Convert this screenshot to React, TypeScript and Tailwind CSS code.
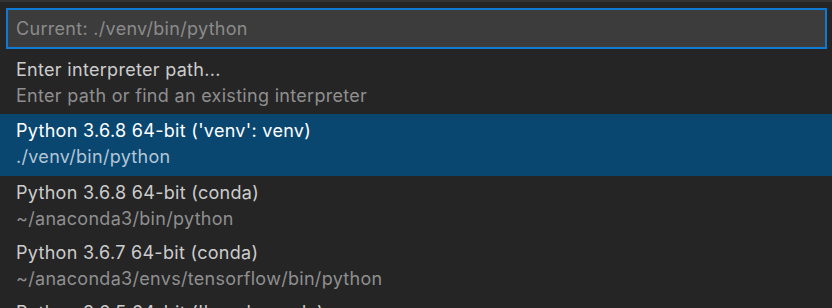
import React from 'react';

type Item = { label: string; detail: string; height: string };

const items: Item[] = [
  { label: 'Enter interpreter path...', detail: 'Enter path or find an existing interpreter', height: 'h-[61px]' },
  { label: "Python 3.6.8 64-bit ('venv': venv)", detail: './venv/bin/python', height: 'h-[62px]' },
  { label: 'Python 3.6.8 64-bit (conda)', detail: '~/anaconda3/bin/python', height: 'h-[60px]' },
  { label: 'Python 3.6.7 64-bit (conda)', detail: '~/anaconda3/envs/tensorflow/bin/python', height: 'h-[60px]' },
  { label: "Python 3.6.5 64-bit ('base': conda)", detail: '~/anaconda3/envs/base/bin/python', height: 'h-[60px]' },
];

export default function App() {
  const selected = 1;

  return (
    <div className="w-[832px] h-[308px] overflow-hidden bg-[#252526] font-['Inter',sans-serif] text-[18px] tracking-[0.3px]">
      {/* top edge of the panel */}
      <div className="h-[2px] bg-[#333333]" />

      {/* filter input */}
      <div className="pt-[6px] pl-[6px] pr-[5px]">
        <div className="h-[41px] border-2 border-[#0e7ad3] bg-[#3c3c3c] flex items-center px-[8px]">
          <span className="text-[#8b8b8b]">Current: ./venv/bin/python</span>
        </div>
      </div>

      {/* picks */}
      <div className="pt-[4px]">
        {items.map((item, i) => (
          <div
            key={item.label}
            className={`${item.height} px-[16px] pt-[4px] flex flex-col ${i === selected ? 'bg-[#094771]' : ''}`}
          >
            <span className={i === selected ? 'leading-[26px] text-white' : 'leading-[26px] text-[#cccccc]'}>
              {item.label}
            </span>
            <span className={i === selected ? 'leading-[26px] text-[#b3c6d6]' : 'leading-[26px] text-[#8f8f8f]'}>
              {item.detail}
            </span>
          </div>
        ))}
      </div>
    </div>
  );
}
